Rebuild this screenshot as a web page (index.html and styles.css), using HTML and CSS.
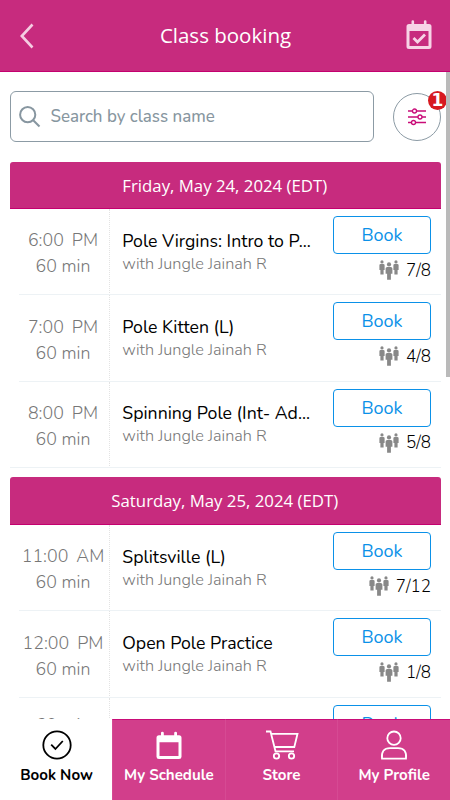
FILE: index.html
```html
<!DOCTYPE html>
<html lang="en">
<head>
  <meta charset="UTF-8" />
  <meta name="viewport" content="width=device-width, initial-scale=1.0"/>
  <title>Class booking</title>
  <link rel="stylesheet" href="styles.css">
</head>
<body>
  <svg class="sprite">
    <symbol id="people" viewBox="0 0 20 20">
      <circle cx="3" cy="1.9" r="1.6"/>
      <path d="M1.700 4h2.600q1.300 0 1.300 1.300v4.700h-1v4.500H1.400V10h-1V5.300Q.4 4 1.700 4z"/>
      <circle cx="17" cy="1.9" r="1.6"/>
      <path d="M15.700 4h2.600q1.300 0 1.300 1.300v4.700h-1v4.500h-3.200V10h-1V5.300q0-1.300 1.300-1.300z"/>
      <circle cx="10" cy="4.400" r="2.100"/>
      <path d="M8.300 7h3.400q1.700 0 1.700 1.600v5.200h-1.500v6H8.100v-6H6.600V8.600Q6.600 7 8.300 7z"/>
    </symbol>
  </svg>

  <div class="app">
    <header class="topbar">
      <svg class="back" width="14" height="26" viewBox="0 0 14 26"><path d="M12.500 1.500 1.800 13l10.700 11.500"/></svg>
      <h1>Class booking</h1>
      <svg class="cal" width="26" height="30" viewBox="0 0 26 30">
        <path class="solid" fill-rule="evenodd" d="M3 4h2.500V1.500q0-1.200 1.300-1.200T8.100 1.500V4h9.800V1.500q0-1.200 1.300-1.200t1.300 1.200V4H23q2.500 0 2.500 2.500v20q0 2.500-2.500 2.500H3Q.5 29 .5 26.500v-20Q.5 4 3 4zM3.500 11v15h19V11z"/>
        <path class="tick" d="m7.500 18 4 4 7.500-7.500"/>
      </svg>
    </header>

    <main class="content">
      <div class="search-row">
        <div class="search">
          <svg width="22" height="22" viewBox="0 0 22 22"><circle cx="8.700" cy="8.700" r="7.600"/><path d="m14.200 14.200 6.300 6.300"/></svg>
          <span>Search by class name</span>
        </div>
        <div class="filter">
          <svg width="18" height="18" viewBox="0 0 18 18">
            <path d="M0 3h18M0 9h18M0 14.500h18"/>
            <circle cx="6.500" cy="3" r="2"/><circle cx="12" cy="9" r="2"/><circle cx="5.500" cy="14.500" r="2"/>
          </svg>
          <span class="badge">1</span>
        </div>
      </div>

      <section class="day">
        <h2>Friday, May 24, 2024 (EDT)</h2>
        <div class="slot">
          <div class="time"><div class="clock"><span>6:00</span><span>PM</span></div><div class="length">60 min</div></div>
          <div class="info"><div class="name">Pole Virgins: Intro to P...</div><div class="teacher">with Jungle Jainah R</div></div>
          <div class="action"><button>Book</button><div class="spots"><svg width="20" height="20"><use href="#people"/></svg><span>7/8</span></div></div>
        </div>
        <div class="slot">
          <div class="time"><div class="clock"><span>7:00</span><span>PM</span></div><div class="length">60 min</div></div>
          <div class="info"><div class="name">Pole Kitten (L)</div><div class="teacher">with Jungle Jainah R</div></div>
          <div class="action"><button>Book</button><div class="spots"><svg width="20" height="20"><use href="#people"/></svg><span>4/8</span></div></div>
        </div>
        <div class="slot">
          <div class="time"><div class="clock"><span>8:00</span><span>PM</span></div><div class="length">60 min</div></div>
          <div class="info"><div class="name">Spinning Pole (Int- Ad...</div><div class="teacher">with Jungle Jainah R</div></div>
          <div class="action"><button>Book</button><div class="spots"><svg width="20" height="20"><use href="#people"/></svg><span>5/8</span></div></div>
        </div>
      </section>

      <section class="day">
        <h2>Saturday, May 25, 2024 (EDT)</h2>
        <div class="slot">
          <div class="time"><div class="clock"><span>11:00</span><span>AM</span></div><div class="length">60 min</div></div>
          <div class="info"><div class="name">Splitsville (L)</div><div class="teacher">with Jungle Jainah R</div></div>
          <div class="action"><button>Book</button><div class="spots"><svg width="20" height="20"><use href="#people"/></svg><span>7/12</span></div></div>
        </div>
        <div class="slot">
          <div class="time"><div class="clock"><span>12:00</span><span>PM</span></div><div class="length">60 min</div></div>
          <div class="info"><div class="name">Open Pole Practice</div><div class="teacher">with Jungle Jainah R</div></div>
          <div class="action"><button>Book</button><div class="spots"><svg width="20" height="20"><use href="#people"/></svg><span>1/8</span></div></div>
        </div>
        <div class="slot peek">
          <div class="time"><div class="length">60 min</div></div>
          <div class="info"><div class="teacher">with Jungle Jainah R</div></div>
          <div class="action"><button>Book</button></div>
        </div>
      </section>
      <div class="scrollbar"></div>
    </main>

    <nav class="tabs">
      <a class="tab active">
        <svg width="30" height="30" viewBox="0 0 30 30"><circle cx="15" cy="15" r="13.700"/><path d="m9.200 14.700 4.200 4.300 7.400-8"/></svg>
        <span>Book Now</span>
      </a>
      <a class="tab">
        <svg width="30" height="30" viewBox="0 0 30 30"><path class="solid" fill-rule="evenodd" d="M5 5.200h2V3q0-1.300 1.400-1.300T9.800 3v2.200h10.400V3q0-1.300 1.400-1.300T23 3v2.200h2q2.500 0 2.500 2.500v19Q27.500 29 25 29H5q-2.500 0-2.500-2.300v-19Q2.500 5.200 5 5.200zM5.500 12.300v13.700h19V12.300z"/></svg>
        <span>My Schedule</span>
      </a>
      <a class="tab">
        <svg width="34" height="30" viewBox="0 0 34 30"><path d="M1 1.500h4.500l5 19.800h18.500M6.500 3.800h26L29.300 17H9.500"/><circle cx="11.500" cy="26" r="2.700"/><circle cx="26.500" cy="26" r="2.700"/></svg>
        <span>Store</span>
      </a>
      <a class="tab">
        <svg width="30" height="30" viewBox="0 0 30 30"><circle cx="15" cy="8.200" r="6.700"/><path d="M3 28.700q-1.200-10.500 8-10.500h8q9.200 0 8 10.500z"/></svg>
        <span>My Profile</span>
      </a>
    </nav>
  </div>
</body>
</html>
```
FILE: styles.css
```css
* {
  box-sizing: border-box;
}
body {
  margin: 0;
  font-family: Nunito, Lato, sans-serif;
  background: #fff;
  color: #000;
}
.sprite {
  display: none;
}
svg {
  flex: none;
}
.app {
  width: 450px;
  height: 800px;
  display: flex;
  flex-direction: column;
  overflow: hidden;
}
.topbar {
  flex: none;
  height: 72px;
  padding: 0 18px 0 20px;
  display: flex;
  align-items: center;
  justify-content: space-between;
  background: #c72b7e;
  border-bottom: 1px solid #c4006f;
  color: #fff;
}
.topbar h1 {
  margin: 0 0 1px 11px;
  font: 400 20.5px/28px "Open Sans", sans-serif;
}
.back {
  fill: none;
  stroke: #f5cde2;
  stroke-width: 2.6;
}
.cal {
  position: relative;
  top: -1px;
}
.cal .solid {
  fill: #f7d3e6;
}
.cal .tick {
  fill: none;
  stroke: #f7d3e6;
  stroke-width: 2.8;
}
.content {
  flex: 1;
  min-height: 0;
  position: relative;
  overflow: hidden;
  padding: 19px 9px 0 9.5px;
}
.search-row {
  display: flex;
  justify-content: space-between;
  align-items: center;
  height: 51px;
  margin-bottom: 19.6px;
}
.search {
  width: 364px;
  height: 51px;
  border: 1px solid #8c9ba5;
  border-radius: 6px;
  padding-left: 8px;
  display: flex;
  align-items: center;
  gap: 10px;
  color: #8796a0;
  font-size: 16.9px;
  font-weight: 500;
}
.search svg {
  fill: none;
  stroke: #8796a0;
  stroke-width: 2;
}
.filter {
  position: relative;
  width: 48px;
  height: 48px;
  border: 1px solid #8c9ba5;
  border-radius: 50%;
  display: flex;
  align-items: center;
  justify-content: center;
}
.filter svg {
  fill: #fff;
  stroke: #c90c78;
  stroke-width: 1.3;
}
.badge {
  position: absolute;
  top: -3px;
  right: -7px;
  width: 19px;
  height: 19px;
  border-radius: 50%;
  background: #d71920;
  color: #fff;
  font: bold 17px/18px "DejaVu Sans", sans-serif;
  text-align: center;
}
.day {
  margin-bottom: 9.4px;
}
.day h2 {
  margin: 0;
  height: 47.6px;
  padding-right: 1px;
  background: #c72b7e;
  border-bottom: 1px solid #c4006f;
  border-radius: 3px 3px 0 0;
  color: #fff;
  font: 400 16.8px/48px "Open Sans", sans-serif;
  text-align: center;
}
.slot {
  height: 86.3px;
  display: flex;
  position: relative;
}
.slot::after {
  content: "";
  position: absolute;
  left: 9px;
  right: 0;
  bottom: 0;
  height: 1px;
  background: #edf2f5;
}
.slot:last-child::after {
  left: 0;
}
.time {
  width: 100px;
  padding: 18.3px 0 0 8px;
  border-right: 1px dotted #e3e3e3;
  color: #777;
  font-size: 17.8px;
  font-weight: 350;
  line-height: 26px;
  text-align: center;
}
.clock {
  display: flex;
  justify-content: center;
  gap: 8px;
}
.info {
  flex: 1;
  padding: 20.6px 0 0 12.8px;
  white-space: nowrap;
}
.name {
  font-size: 17.7px;
  line-height: 23px;
}
.teacher {
  font-size: 16.3px;
  font-weight: 350;
  line-height: 22px;
  color: #777;
}
.action {
  width: 98px;
  margin-right: 10px;
  padding-top: 7px;
}
.action button {
  display: block;
  width: 98px;
  height: 38px;
  padding: 0;
  border: 1px solid #0b91e8;
  border-radius: 4px;
  background: #fff;
  color: #0b91e8;
  font: 400 18px/36px Nunito, Lato, sans-serif;
}
.spots {
  display: flex;
  justify-content: flex-end;
  align-items: center;
  gap: 7px;
  margin-top: 4px;
  height: 24px;
  font-size: 17px;
  font-weight: 350;
}
.spots svg {
  fill: #888;
}
.peek .time {
  padding-top: 14px;
}
.peek .info {
  padding-top: 16px;
}
.scrollbar {
  position: absolute;
  top: 0;
  right: 0;
  width: 4.5px;
  height: 305px;
  background: #bababa;
}
.tabs {
  flex: none;
  height: 81px;
  display: flex;
  background: #d23e8b;
  color: #fff;
}
.tab {
  flex: 1;
  padding: 10px 0 0;
  border-top: 1px solid #c90c78;
  border-left: 1px solid #d64a93;
  display: flex;
  flex-direction: column;
  align-items: center;
  gap: 4px;
  font-size: 15.1px;
  font-weight: 700;
  line-height: 22px;
}
.tab.active {
  flex: 0 0 112px;
  border-color: #fff;
  background: #fff;
  color: #000;
}
.tab svg {
  fill: none;
  stroke: currentColor;
  stroke-width: 1.8;
}
.tab svg .solid {
  fill: #fff;
  stroke: none;
}
```
